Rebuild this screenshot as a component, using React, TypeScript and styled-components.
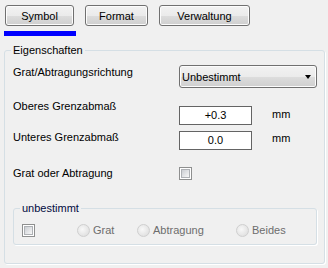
import React from "react";
import styled, { createGlobalStyle } from "styled-components";

const GlobalStyle = createGlobalStyle`
  body {
    margin: 0;
    background: #f0f0f0;
    font-family: "Liberation Sans", Arial, sans-serif;
    font-size: 11px;
    color: #000;
  }
`;

const Page = styled.div`
  width: 328px;
  height: 268px;
  box-sizing: border-box;
  padding: 5px 0 0 4px;
  display: flex;
  flex-direction: column;
`;

const TabBar = styled.div`
  display: flex;
  gap: 11px;
  padding-left: 1px;
`;

const TabButton = styled.button<{ $w: number }>`
  width: ${(p) => p.$w}px;
  height: 21px;
  padding: 0;
  border: 1px solid #707070;
  border-radius: 3px;
  background: linear-gradient(#f2f2f2 0%, #ebebeb 50%, #dddddd 51%, #cfcfcf 100%);
  box-shadow: inset 0 0 0 1px #fcfcfc;
  font-family: inherit;
  font-size: 11px;
  color: #000;
`;

const Indicator = styled.div`
  width: 72px;
  height: 5px;
  margin-top: 5px;
  background: #0000ff;
`;

const Group = styled.fieldset<{ $inner?: boolean }>`
  margin: ${(p) => (p.$inner ? "22px 0 0 0" : "8px 0 0 0")};
  padding: 0;
  min-width: 0;
  width: ${(p) => (p.$inner ? "304px" : "321px")};
  box-sizing: border-box;
  border: 1px solid #d5dfe5;
  border-radius: 3px;
  box-shadow: 1px 1px 0 #fff;
`;

const Caption = styled.legend<{ $color?: string }>`
  margin-left: 6px;
  padding: 0 2px;
  line-height: 13px;
  color: ${(p) => p.$color || "#000"};
`;

const GroupBody = styled.div`
  padding: 8px 7px 18px 8px;
`;

const Row = styled.div<{ $top: number }>`
  display: grid;
  grid-template-columns: 166px 93px 1fr;
  align-items: start;
  margin-top: ${(p) => p.$top}px;
`;

const Label = styled.div<{ $off?: number }>`
  line-height: 13px;
  margin-top: ${(p) => p.$off || 0}px;
  white-space: nowrap;
`;

const Combo = styled.div`
  width: 138px;
  height: 23px;
  box-sizing: border-box;
  border: 1px solid #707070;
  border-radius: 3px;
  background: linear-gradient(#f2f2f2 0%, #ebebeb 50%, #dddddd 51%, #cfcfcf 100%);
  box-shadow: inset 0 0 0 1px #fcfcfc;
  display: flex;
  align-items: center;
  justify-content: space-between;
  padding: 0 5px 0 2px;
`;

const Arrow = styled.span`
  width: 0;
  height: 0;
  border-left: 3.5px solid transparent;
  border-right: 3.5px solid transparent;
  border-top: 4px solid #000;
`;

const TextBox = styled.div<{ $off?: number }>`
  width: 73px;
  height: 19px;
  box-sizing: border-box;
  margin-top: ${(p) => p.$off || 0}px;
  border: 1px solid #646464;
  background: #fff;
  text-align: center;
  line-height: 17px;
`;

const Check = styled.span<{ $off?: number }>`
  display: block;
  position: relative;
  width: 13px;
  height: 13px;
  box-sizing: border-box;
  margin-top: ${(p) => p.$off || 0}px;
  border: 1px solid #8e8f8f;
  background: #fff;
  &::after {
    content: "";
    position: absolute;
    inset: 1px;
    border: 1px solid #aeb1b5;
    background: linear-gradient(135deg, #cbced3, #f7f7f7);
  }
`;

const InnerBody = styled.div`
  display: grid;
  grid-template-columns: 55px 60px 99px 1fr;
  align-items: center;
  padding: 9px 0 7px 8px;
`;

const Option = styled.div`
  display: flex;
  align-items: center;
  gap: 3px;
  color: #6d6d6d;
  line-height: 13px;
`;

const Radio = styled.span`
  width: 13px;
  height: 13px;
  box-sizing: border-box;
  border-radius: 50%;
  border: 1px solid #cfcfcf;
  background: radial-gradient(circle at 40% 40%, #f8f8f8 0%, #e6e6e6 60%, #d8d8d8 100%);
`;

export default function App() {
  return (
    <>
      <GlobalStyle />
      <Page>
        <TabBar>
          <TabButton $w={69}>Symbol</TabButton>
          <TabButton $w={63}>Format</TabButton>
          <TabButton $w={91}>Verwaltung</TabButton>
        </TabBar>
        <Indicator />
        <Group>
          <Caption>Eigenschaften</Caption>
          <GroupBody>
            <Row $top={0}>
              <Label $off={1}>Grat/Abtragungsrichtung</Label>
              <Combo style={{ gridColumn: "2 / 4" }}>
                <span>Unbestimmt</span>
                <Arrow />
              </Combo>
            </Row>
            <Row $top={12}>
              <Label>Oberes Grenzabmaß</Label>
              <TextBox $off={6}>+0.3</TextBox>
              <Label $off={8}>mm</Label>
            </Row>
            <Row $top={6}>
              <Label>Unteres Grenzabmaß</Label>
              <TextBox>0.0</TextBox>
              <Label $off={1}>mm</Label>
            </Row>
            <Row $top={17}>
              <Label>Grat oder Abtragung</Label>
              <Check />
            </Row>
            <Group $inner>
              <Caption $color="#000a40">unbestimmt</Caption>
              <InnerBody>
                <Check />
                <Option>
                  <Radio />
                  Grat
                </Option>
                <Option>
                  <Radio />
                  Abtragung
                </Option>
                <Option>
                  <Radio />
                  Beides
                </Option>
              </InnerBody>
            </Group>
          </GroupBody>
        </Group>
      </Page>
    </>
  );
}
